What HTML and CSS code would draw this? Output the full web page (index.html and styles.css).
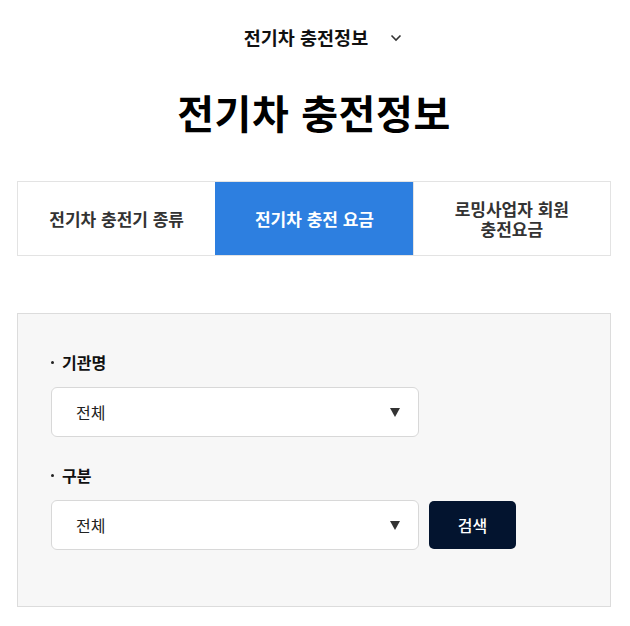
FILE: index.html
```html
<!DOCTYPE html>
<html lang="ko">
<head>
<meta charset="utf-8">
<link rel="stylesheet" href="styles.css">
</head>
<body>
<div class="page">
  <div class="topnav">
    <span class="topnav-title">전기차 충전정보</span>
    <svg class="chev" width="12" height="8" viewBox="0 0 12 8"><path d="M1.5 1.5 L6 6 L10.5 1.5" fill="none" stroke="#333" stroke-width="1.6"/></svg>
  </div>
  <h1 class="title">전기차 충전정보</h1>
  <div class="tabs">
    <div class="tab">전기차 충전기 종류</div>
    <div class="tab active">전기차 충전 요금</div>
    <div class="tab">로밍사업자 회원<br>충전요금</div>
  </div>
  <div class="search">
    <div class="field">
      <div class="label"><span class="dot"></span>기관명</div>
      <div class="row">
        <div class="select"><span>전체</span><span class="tri"></span></div>
      </div>
    </div>
    <div class="field">
      <div class="label"><span class="dot"></span>구분</div>
      <div class="row">
        <div class="select"><span>전체</span><span class="tri"></span></div>
        <button class="btn">검색</button>
      </div>
    </div>
  </div>
</div>
</body>
</html>
```

FILE: styles.css
```css
* { box-sizing: border-box; }
body {
  margin: 0;
  background: #fff;
  font-family: "Noto Sans CJK KR", "Noto Sans", sans-serif;
  color: #111;
}
.page {
  padding: 0 19px 0 17px;
}
.topnav {
  height: 74px;
  display: flex;
  align-items: center;
  justify-content: center;
  gap: 22px;
  padding-left: 18px;
}
.topnav-title {
  font-size: 18.5px;
  font-weight: 700;
  color: #111;
}
.chev { margin-top: 1px; }
.title {
  margin: 0;
  text-align: center;
  font-size: 40px;
  font-weight: 700;
  line-height: 76px;
  height: 107px;
  color: #000;
  letter-spacing: 0.6px;
}
.tabs {
  display: grid;
  grid-template-columns: 1fr 1fr 1fr;
  height: 75px;
  border: 1px solid #e3e3e3;
}
.tab {
  display: flex;
  align-items: center;
  justify-content: center;
  text-align: center;
  font-size: 17px;
  font-weight: 700;
  line-height: 20px;
  color: #333;
  border-left: 1px solid #e3e3e3;
}
.tab:first-child { border-left: none; }
.tab.active {
  background: #2d7fe0;
  color: #fff;
  border-left-color: #2d7fe0;
}
.search {
  margin-top: 57px;
  height: 294px;
  background: #f7f7f7;
  border: 1px solid #dcdcdc;
  padding: 36px 0 0 33px;
}
.field { margin-bottom: 26px; }
.label {
  display: flex;
  align-items: center;
  font-size: 16px;
  font-weight: 700;
  color: #111;
  height: 24px;
  margin-bottom: 13px;
}
.dot {
  width: 3px;
  height: 3px;
  background: #222;
  border-radius: 50%;
  margin: 0 8px 0 0;
}
.row {
  display: flex;
  align-items: center;
  gap: 10px;
}
.select {
  width: 368px;
  height: 50px;
  background: #fff;
  border: 1px solid #d8d8d8;
  border-radius: 6px;
  display: flex;
  align-items: center;
  justify-content: space-between;
  padding: 0 18px 0 24px;
  font-size: 16px;
  color: #222;
}
.tri {
  width: 0;
  height: 0;
  border-left: 5.5px solid transparent;
  border-right: 5.5px solid transparent;
  border-top: 9px solid #333;
}
.btn {
  width: 87px;
  height: 48px;
  background: #03142f;
  color: #fff;
  border: none;
  border-radius: 5px;
  font-family: inherit;
  font-size: 16px;
  font-weight: 500;
}
```
